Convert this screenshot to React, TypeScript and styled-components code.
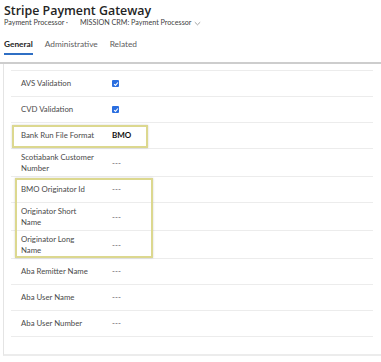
import React from 'react'
import styled, { createGlobalStyle } from 'styled-components'

const GlobalStyle = createGlobalStyle`
  body {
    margin: 0;
    background: #ffffff;
    font-family: Lato, 'Open Sans', sans-serif;
    color: #242424;
  }
`

const Page = styled.div`
  width: 381px;
  height: 362px;
  overflow: hidden;
  background: #fff;
`

const Header = styled.div`
  padding: 2px 0 0 4px;
`

const Title = styled.div`
  font-family: 'Open Sans', sans-serif;
  font-size: 12.4px;
  font-weight: 600;
  line-height: 17px;
  color: #242424;
`

const Breadcrumb = styled.div`
  display: flex;
  align-items: center;
  font-size: 7.2px;
  line-height: 10px;
  color: #424242;
  margin-top: -1px;
`

const Crumb = styled.span`
  margin-right: 12px;
`

const Tabs = styled.div`
  display: flex;
  gap: 12px;
  margin-top: 10px;
  padding-left: 4px;
`

const Tab = styled.div<{ $active?: boolean }>`
  font-size: 8.3px;
  line-height: 12px;
  padding-bottom: 3px;
  color: ${(p) => (p.$active ? '#242424' : '#5c5c5c')};
  font-weight: ${(p) => (p.$active ? 700 : 400)};
  border-bottom: 2px solid ${(p) => (p.$active ? '#2f6fc4' : 'transparent')};
`

const Rule = styled.div`
  height: 2px;
  background: #cdcdcd;
  margin-top: 7px;
`

const Card = styled.div`
  margin-left: 3px;
  border-left: 1px solid #e4e4e4;
  border-bottom: 2px solid #ececec;
  padding: 6px 8px 17px 7px;
`

const FieldList = styled.div`
  border-bottom: 1px solid #ececec;
`

const Group = styled.div<{ $inset: string }>`
  position: relative;
  &::after {
    content: '';
    position: absolute;
    inset: ${(p) => p.$inset};
    border: 2px solid #dcd88f;
    box-shadow: 0 0 2px rgba(0, 0, 0, 0.18);
    pointer-events: none;
  }
`

const Row = styled.div<{ $tall?: boolean }>`
  display: grid;
  grid-template-columns: 91px 1fr;
  align-items: ${(p) => (p.$tall ? 'start' : 'center')};
  box-sizing: border-box;
  min-height: ${(p) => (p.$tall ? 28 : 26)}px;
  padding: ${(p) => (p.$tall ? '3px' : '0')} 0 0 10px;
  border-top: 1px solid #ececec;
`

const Label = styled.div`
  font-size: 7.8px;
  line-height: 11px;
  color: #4a4a4a;
  white-space: nowrap;
`

const Value = styled.div<{ $tall?: boolean; $strong?: boolean }>`
  font-size: 8px;
  line-height: 11px;
  padding-top: ${(p) => (p.$tall ? 6 : 0)}px;
  color: ${(p) => (p.$strong ? '#111' : '#555')};
  font-weight: ${(p) => (p.$strong ? 700 : 400)};
  display: flex;
  align-items: center;
`

const Check = styled.span`
  width: 7px;
  height: 7px;
  border-radius: 1px;
  background: #2a6ee0;
  display: inline-flex;
  align-items: center;
  justify-content: center;
`

const Chevron = () => (
  <svg width="7" height="5" viewBox="0 0 7 5" style={{ marginLeft: 3 }}>
    <path d="M0.8 1.2 L3.5 3.8 L6.2 1.2" fill="none" stroke="#8a8a8a" strokeWidth="0.8" />
  </svg>
)

const Checkbox = () => (
  <Check>
    <svg width="6" height="6" viewBox="0 0 6 6">
      <path d="M1.1 3.1 L2.5 4.4 L4.9 1.5" fill="none" stroke="#fff" strokeWidth="1.1" />
    </svg>
  </Check>
)

interface FieldProps {
  label: string[]
  strong?: boolean
  children?: React.ReactNode
}

const Field = ({ label, strong, children }: FieldProps) => {
  const tall = label.length > 1
  return (
    <Row $tall={tall}>
      <Label>
        {label.map((line) => (
          <div key={line}>{line}</div>
        ))}
      </Label>
      <Value $tall={tall} $strong={strong}>
        {children ?? '---'}
      </Value>
    </Row>
  )
}

export default function App() {
  return (
    <Page>
      <GlobalStyle />
      <Header>
        <Title>Stripe Payment Gateway</Title>
        <Breadcrumb>
          <Crumb>Payment Processor ·</Crumb>
          <span>MISSION CRM: Payment Processor</span>
          <Chevron />
        </Breadcrumb>
      </Header>
      <Tabs>
        <Tab $active>General</Tab>
        <Tab>Administrative</Tab>
        <Tab>Related</Tab>
      </Tabs>
      <Rule />
      <Card>
        <FieldList>
          <Field label={['AVS Validation']}>
            <Checkbox />
          </Field>
          <Field label={['CVD Validation']}>
            <Checkbox />
          </Field>
          <Group $inset="3px 225px 0 1px">
            <Field label={['Bank Run File Format']} strong>
              BMO
            </Field>
          </Group>
          <Field label={['Scotiabank Customer', 'Number']} />
          <Group $inset="2px 220px 0 4px">
            <Field label={['BMO Originator Id']} />
            <Field label={['Originator Short', 'Name']} />
            <Field label={['Originator Long', 'Name']} />
          </Group>
          <Field label={['Aba Remitter Name']} />
          <Field label={['Aba User Name']} />
          <Field label={['Aba User Number']} />
        </FieldList>
      </Card>
    </Page>
  )
}
